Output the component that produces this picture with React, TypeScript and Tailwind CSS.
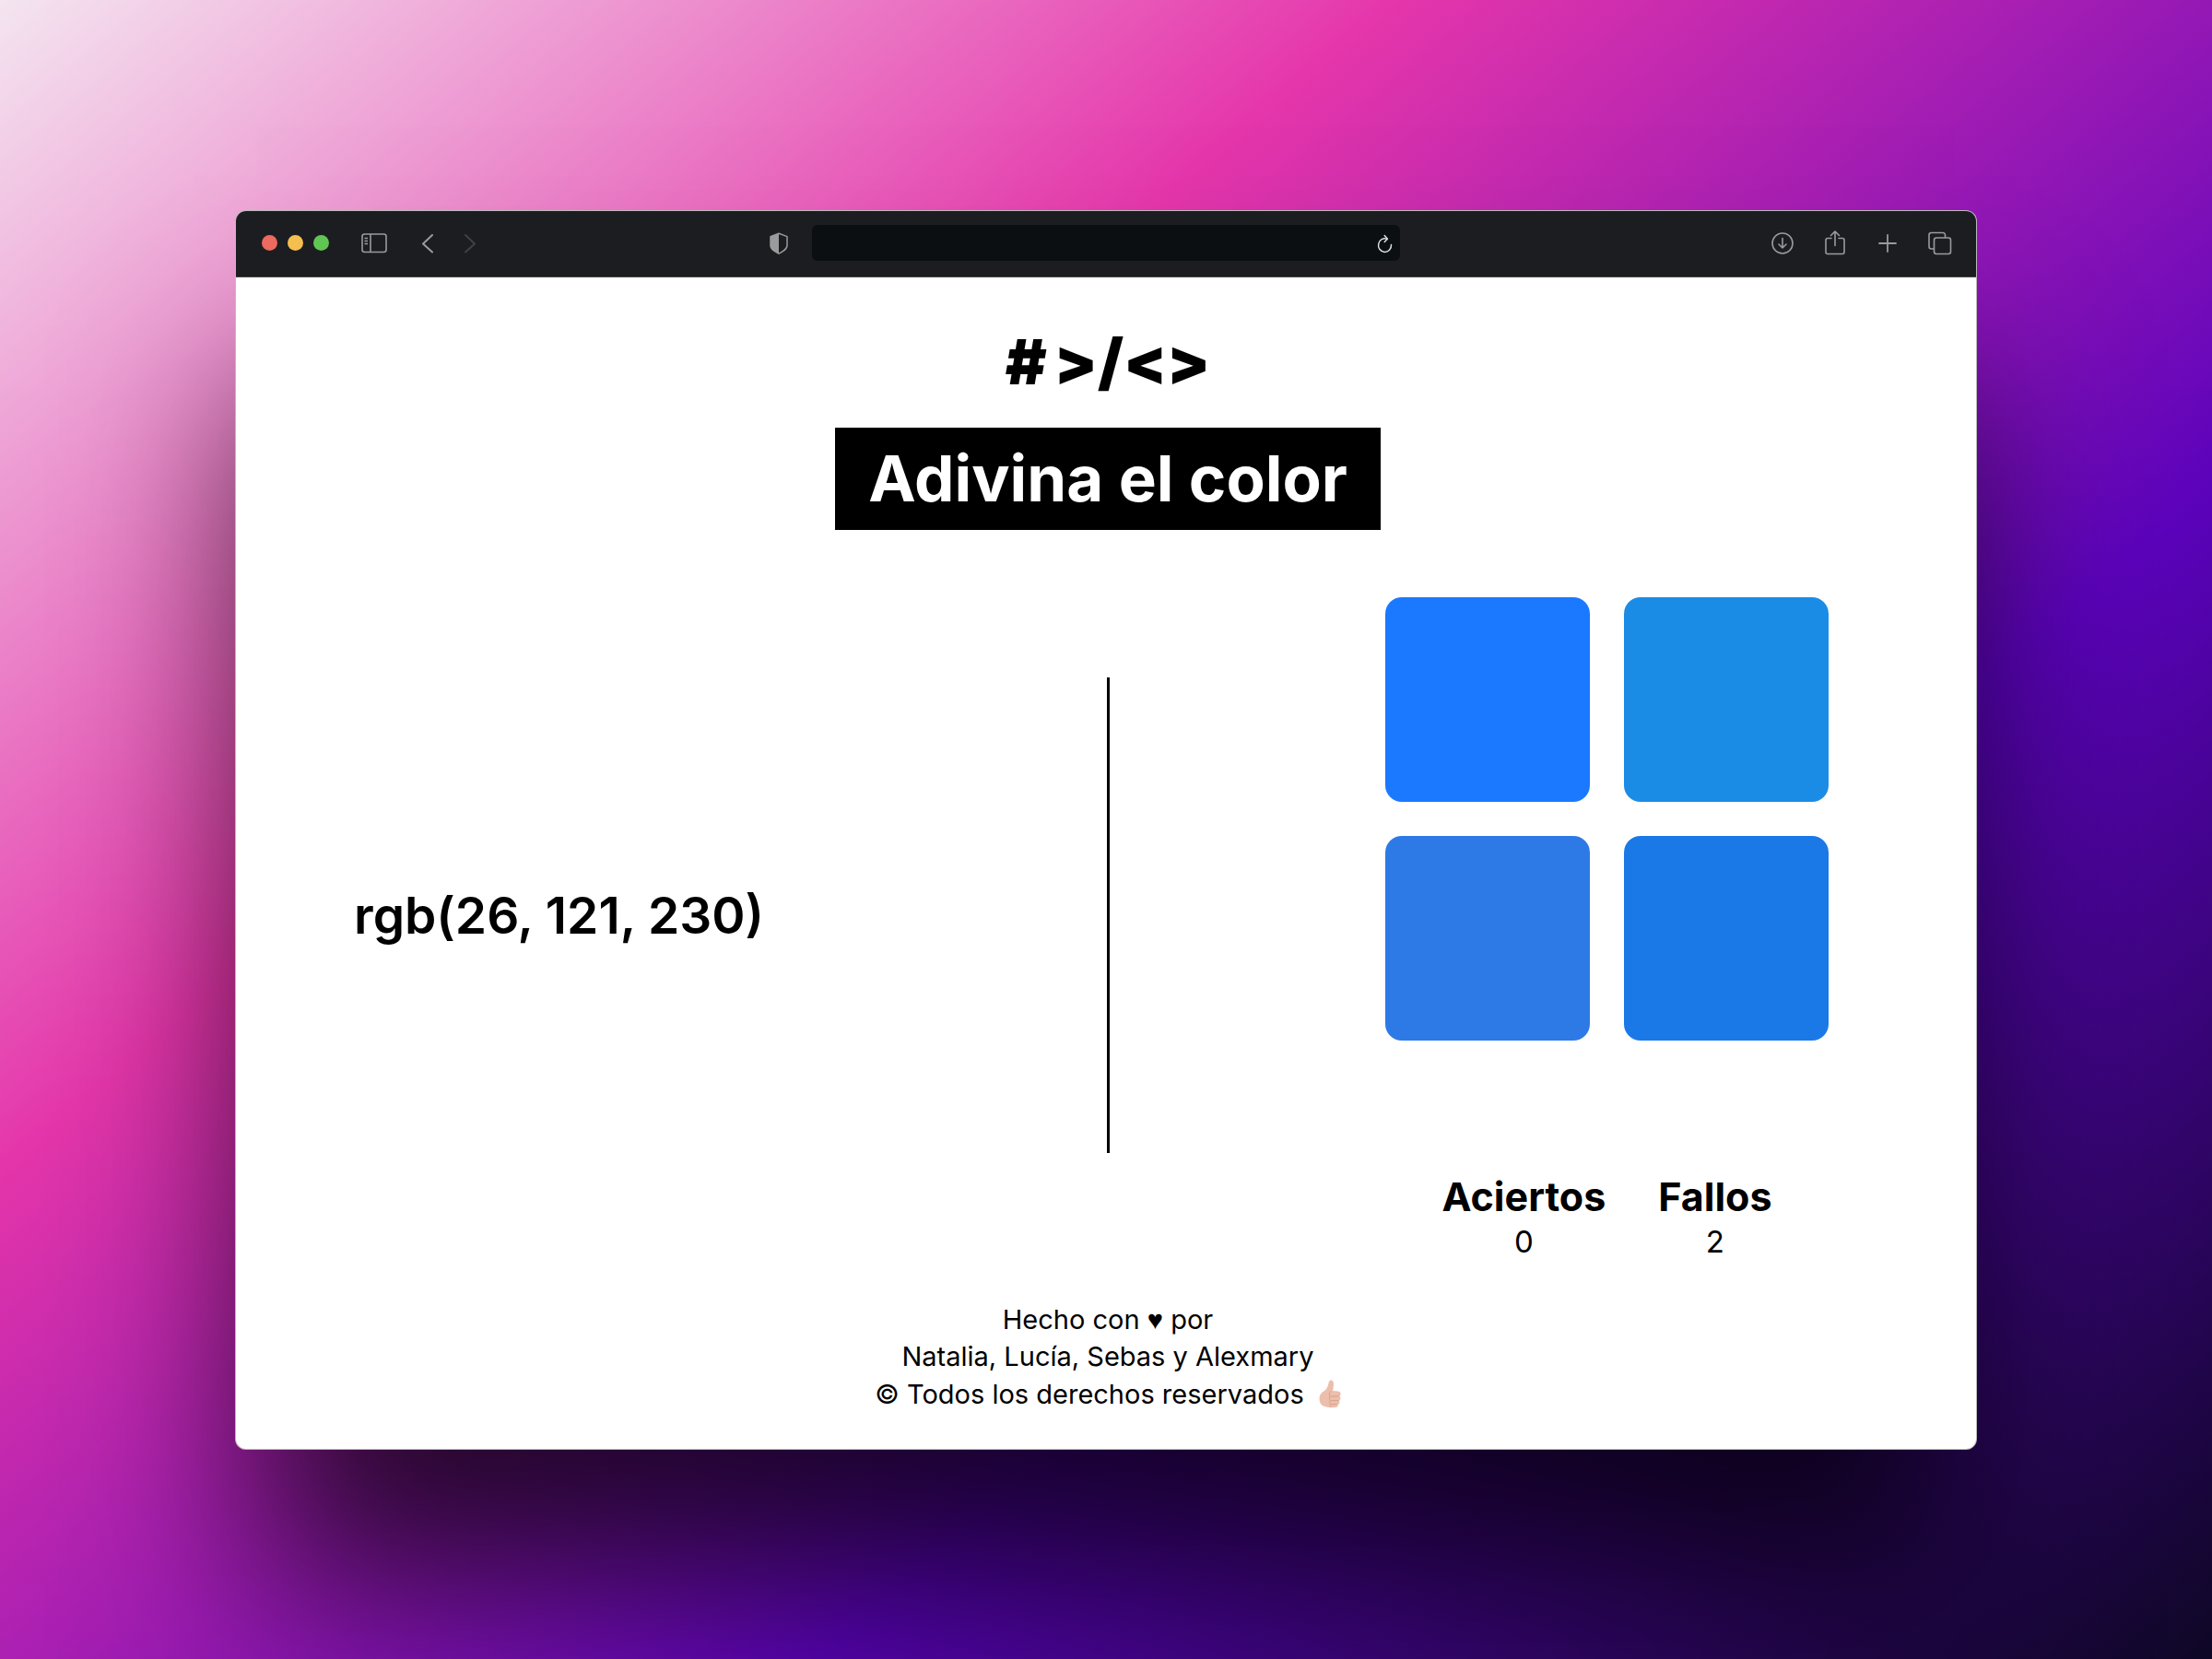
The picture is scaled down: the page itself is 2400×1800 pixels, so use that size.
import type { ReactNode } from 'react';

const colors = [
  { name: 'rgb(26, 121, 255)', bg: 'bg-[#1a79ff]' },
  { name: 'rgb(26, 140, 230)', bg: 'bg-[#1a8ce6]' },
  { name: 'rgb(45, 121, 230)', bg: 'bg-[#2d79e6]' },
  { name: 'rgb(26, 121, 230)', bg: 'bg-[#1a79e6]' },
];

function ToolButton({ label, children }: { label: string; children: ReactNode }) {
  return (
    <button type="button" aria-label={label} className="flex shrink-0 items-center justify-center">
      {children}
    </button>
  );
}

function Toolbar() {
  return (
    <header className="grid h-[72px] grid-cols-[1fr_minmax(0,638px)_1fr] items-center border-b border-[#4a4a4d] bg-[#1c1d20] pb-px text-[#9b9b9d]">
      <div className="flex items-center pr-6 pl-7">
        <div className="flex gap-[11px]">
          <span className="size-[17px] rounded-full bg-[#ec6a5e]" />
          <span className="size-[17px] rounded-full bg-[#f4bf4f]" />
          <span className="size-[17px] rounded-full bg-[#61c554]" />
        </div>
        <div className="ml-[33px] flex items-center">
          <ToolButton label="Barra lateral">
            <svg width="32" height="32" viewBox="0 0 32 32" fill="none" stroke="currentColor" strokeWidth="1.6">
              <rect x="3" y="6" width="26" height="19.5" rx="2.5" />
              <path d="M12 6v19.500M5.500 10.500h3.500M5.500 13.500h3.500M5.500 16.500h3.500" />
            </svg>
          </ToolButton>
        </div>
        <div className="ml-[30px] flex items-center gap-[22px]">
          <ToolButton label="Atrás">
            <svg width="24" height="24" viewBox="0 0 24 24" fill="none" stroke="currentColor" strokeWidth="2" strokeLinecap="round" strokeLinejoin="round">
              <path d="M17 3 7 12.500l10 9" />
            </svg>
          </ToolButton>
          <ToolButton label="Adelante">
            <svg className="text-[#404144]" width="24" height="24" viewBox="0 0 24 24" fill="none" stroke="currentColor" strokeWidth="2" strokeLinecap="round" strokeLinejoin="round">
              <path d="m7 3 10 9.500-10 9" />
            </svg>
          </ToolButton>
        </div>
        <div className="ml-auto flex">
          <ToolButton label="Privacidad">
            <svg width="24" height="24" viewBox="0 0 24 24">
              <path d="M12 1.200 21 4.600v10c0 4-4.500 6-9 8.600-4.500-2.600-9-4.600-9-8.600v-10Z" fill="none" stroke="currentColor" strokeWidth="1.500" strokeLinejoin="round" />
              <path d="M12 1.200v22c-4.500-2.600-9-4.600-9-8.600v-10Z" fill="currentColor" />
            </svg>
          </ToolButton>
        </div>
      </div>
      <div className="flex h-[39px] items-center rounded-md bg-[#0b0f12] pr-1.5">
        <input type="text" aria-label="Dirección" className="min-w-0 flex-1 bg-transparent px-4 text-base text-white outline-none" />
        <ToolButton label="Recargar">
          <svg className="text-[#dcdcdd]" width="22" height="22" viewBox="0 0 22 22" fill="none" stroke="currentColor" strokeWidth="1.500" strokeLinecap="round" strokeLinejoin="round">
            <path d="M18.500 12.500A7 7.300 0 1 1 14 6.300" />
            <path d="m11.200 2.500 3.200 3.800-3.200 3.200" />
          </svg>
        </ToolButton>
      </div>
      <div className="flex items-center justify-end gap-[25px] pr-[23px]">
        <ToolButton label="Descargas">
          <svg width="32" height="32" viewBox="0 0 32 32" fill="none" stroke="currentColor" strokeWidth="1.600" strokeLinecap="round" strokeLinejoin="round">
            <circle cx="16" cy="16" r="11" />
            <path d="M16 10.500v10.500m-4-4 4 4 4-4" />
          </svg>
        </ToolButton>
        <ToolButton label="Compartir">
          <svg width="32" height="32" viewBox="0 0 32 32" fill="none" stroke="currentColor" strokeWidth="1.600" strokeLinecap="round" strokeLinejoin="round">
            <path d="M12 10.500H8a2 2 0 0 0-2 2v13a2 2 0 0 0 2 2h16a2 2 0 0 0 2-2v-13a2 2 0 0 0-2-2h-4" />
            <path d="M16 18.500V3m-4.500 4.500L16 3l4.500 4.500" />
          </svg>
        </ToolButton>
        <ToolButton label="Nueva pestaña">
          <svg width="32" height="32" viewBox="0 0 32 32" fill="none" stroke="currentColor" strokeWidth="1.800" strokeLinecap="round">
            <path d="M16 7v18M7 16h18" />
          </svg>
        </ToolButton>
        <ToolButton label="Pestañas">
          <svg width="32" height="32" viewBox="0 0 32 32" fill="none" stroke="currentColor" strokeWidth="1.600" strokeLinejoin="round">
            <rect x="9.500" y="10" width="18" height="17.500" rx="2.500" />
            <path d="M9.500 22H6.500A2.500 2.500 0 0 1 4 19.500V7a2.500 2.500 0 0 1 2.500-2.500H19A2.500 2.500 0 0 1 21.500 7v3" />
          </svg>
        </ToolButton>
      </div>
    </header>
  );
}

function Score({ label, value }: { label: string; value: number }) {
  return (
    <div className="text-center">
      <h2 className="text-[43px] leading-[56px] font-bold">{label}</h2>
      <p className="text-[33px] leading-[42px]">{value}</p>
    </div>
  );
}

function ThumbsUp() {
  return (
    <svg className="ml-4 inline-block h-[31px] w-6 align-[-5px]" viewBox="0 0 24 31" role="img" aria-label="Pulgar arriba">
      <path d="M.5 20.500c0-4 1.800-6 4.800-8C8.500 10.200 10 7 10.600 3.200 11 .8 12.200.2 13.500.6c2 .6 2.700 2.400 2.500 5-.2 2-.6 4-.8 6.400l5.300.5c2.500.3 3.300 1.700 3.100 3.300-.1 1-.5 1.700-1.200 2.100.9.700 1.200 1.700 1 2.800-.2 1.100-.8 1.800-1.600 2.100.6.700.8 1.600.5 2.500-.3 1-.9 1.500-1.800 1.800.4.700.3 1.500-.2 2-1 1-3.400 1.300-7.100 1.100C5.500 30 .5 27.500.5 20.500Z" fill="#ebbfab" />
      <path d="M13 12.500c-1.900 1-2.300 4.300-.6 5.500-1.500 1.200-1.500 3.300.1 4.400-1.200 1.200-1 3.200.4 4-.8.900-.6 2.200.3 3M13 18h9M13 22.600h8.300M13.400 26.600h6.200" fill="none" stroke="#d99f8b" strokeWidth="1" />
    </svg>
  );
}

export default function App() {
  return (
    <div className="flex min-h-screen items-center overflow-hidden bg-[linear-gradient(140deg,#f4e5f0,#e536ab,#5c03bc,#0e0725)] px-[255px] py-16 font-[Inter,sans-serif] text-black">
      <div className="w-full rounded-xl shadow-[0_170px_190px_-24px_rgba(0,0,0,0.76)]">
        <div className="overflow-hidden rounded-xl border border-[#8c8c8c]/60 bg-white">
          <Toolbar />
          <main className="flex flex-col items-center pl-1">
            <p className="mt-[47px] flex text-[68px] leading-[88px] font-black">
              <span className="mr-2">#</span>
              <span>&gt;/&lt;&gt;</span>
            </p>
            <h1 className="mt-7 bg-black px-9 py-4 text-[69px] leading-[79px] font-bold text-white">Adivina el color</h1>

            <section className="grid w-full grid-cols-[1fr_3px_1fr] items-center">
              <p className="pl-31 text-[55px] leading-[64px] font-semibold">rgb(26, 121, 230)</p>
              <div className="h-[516px] bg-black" />
              <div className="flex justify-end pt-[73px] pr-40 pb-11">
                <div className="flex flex-col items-center">
                  <div className="grid grid-cols-2 gap-[37px]">
                    {colors.map((color) => (
                      <button key={color.name} type="button" aria-label={color.name} className={`size-[222px] rounded-[18px] ${color.bg}`} />
                    ))}
                  </div>
                  <div className="mt-[141px] flex gap-[57px]">
                    <Score label="Aciertos" value={0} />
                    <Score label="Fallos" value={2} />
                  </div>
                </div>
              </div>
            </section>

            <footer className="pb-10 text-center text-[29px] leading-[39px]">
              <p>
                Hecho con <span className="font-['Liberation_Sans',sans-serif]">♥</span> por
              </p>
              <p>Natalia, Lucía, Sebas y Alexmary</p>
              <p className="mt-0.5">© Todos los derechos reservados<ThumbsUp /></p>
            </footer>
          </main>
        </div>
      </div>
    </div>
  );
}
